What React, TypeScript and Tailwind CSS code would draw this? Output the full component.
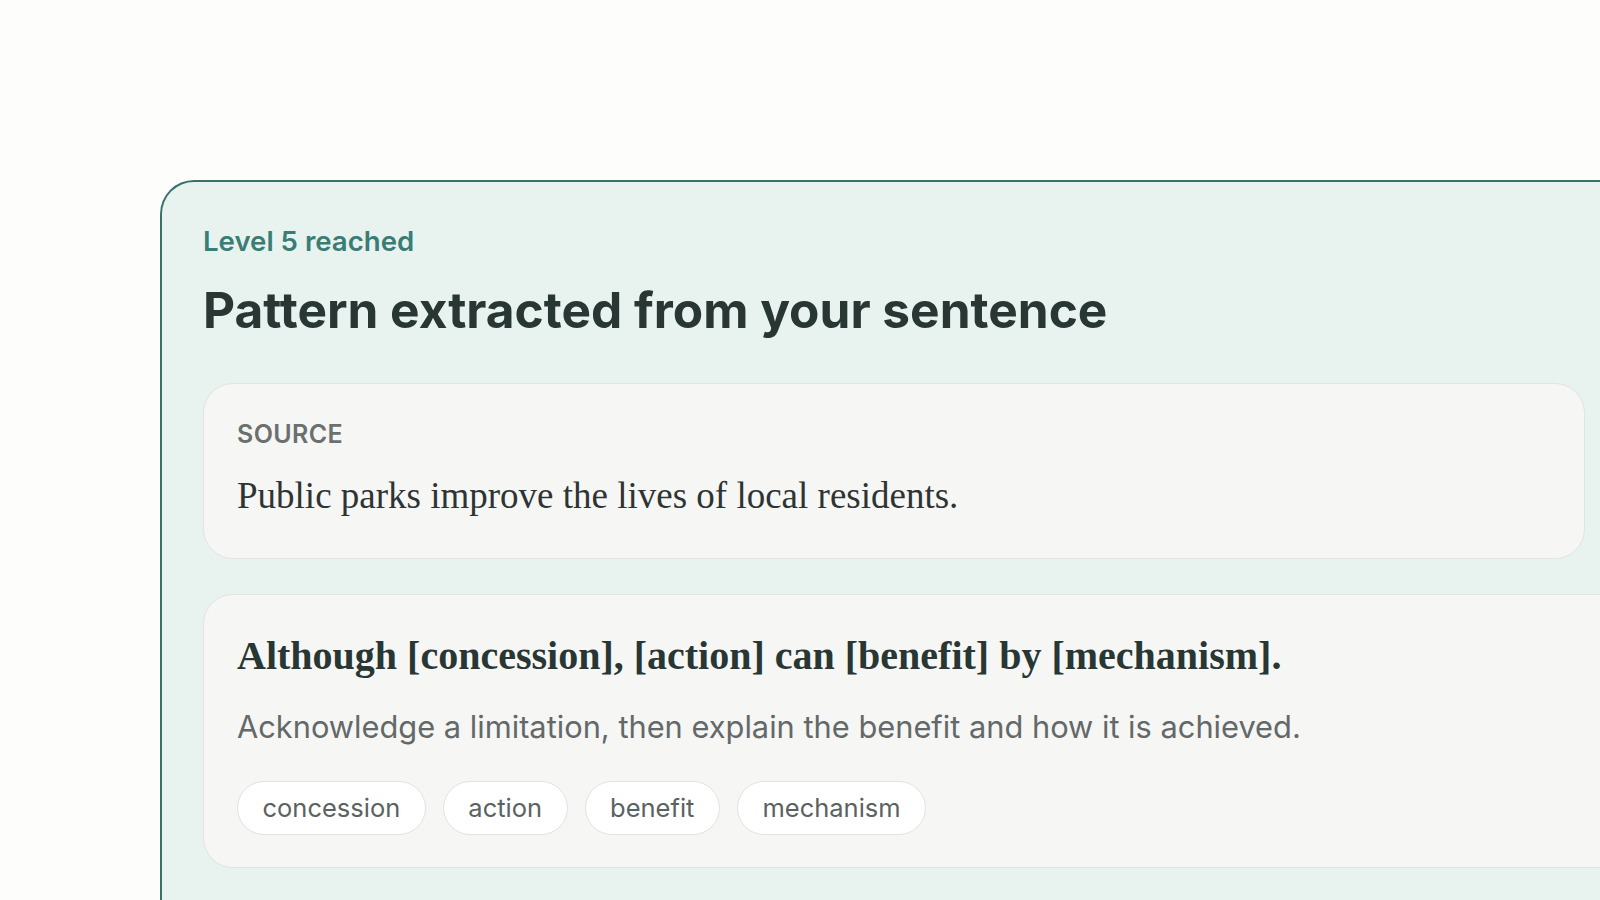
export default function App() {
  const slots = ["concession", "action", "benefit", "mechanism"];

  return (
    <div className="h-screen w-full overflow-hidden bg-[#fdfdfb] pt-[180px] pl-[160px]" style={{ fontFamily: "Inter, 'Noto Sans', sans-serif" }}>
      <div className="w-[1520px] min-h-[760px] rounded-tl-[34px] border-t-2 border-l-2 border-[#3b716c] bg-[#e8f2ef] pt-[39px] pl-[41px]">
        <p className="text-[27.6px] leading-[40px] font-semibold text-[#3a7d74]">Level 5 reached</p>
        <h1 className="mt-[19px] text-[49.6px] leading-[60px] font-bold text-[#283634]">
          Pattern extracted from your sentence
        </h1>

        <div className="mt-[43px] w-[1382px] rounded-[30px] border border-[#e1e4e2] bg-[#f6f6f5] px-[33px] pt-[33px] pb-[40px]">
          <p className="text-[25px] leading-[34px] font-semibold tracking-[0.4px] text-[#6b706f]">SOURCE</p>
          <p
            className="mt-[23px] text-[37px] leading-[44px] text-[#2d3433]"
            style={{ fontFamily: "'Liberation Serif', serif" }}
          >
            Public parks improve the lives of local residents.
          </p>
        </div>

        <div className="mt-[35px] w-[1500px] rounded-l-[30px] border border-[#e1e4e2] bg-[#f6f6f5] px-[33px] pt-[33px] pb-[32px]">
          <p
            className="text-[40px] leading-[56px] font-bold text-[#283634]"
            style={{ fontFamily: "'Liberation Serif', serif" }}
          >
            Although [concession], [action] can [benefit] by [mechanism].
          </p>
          <p className="mt-[23px] text-[30.8px] leading-[40px] text-[#636968]">
            Acknowledge a limitation, then explain the benefit and how it is achieved.
          </p>
          <div className="mt-[34px] flex gap-[17px]">
            {slots.map((s) => (
              <span
                key={s}
                className="flex h-[54px] items-center rounded-full border border-[#e0e3e1] bg-white px-[24.5px] text-[25.5px] text-[#5b6261]"
              >
                {s}
              </span>
            ))}
          </div>
        </div>
      </div>
    </div>
  );
}
